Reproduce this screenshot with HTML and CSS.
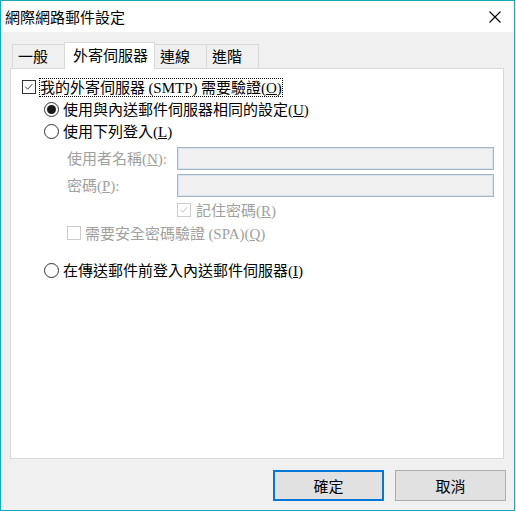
FILE: index.html
```
<!DOCTYPE html>
<html lang="zh-Hant">
<head>
<meta charset="utf-8">
<title>網際網路郵件設定</title>
<link rel="stylesheet" href="styles.css">
</head>
<body>
<div class="window">
  <div class="titlebar">
    <span class="title">網際網路郵件設定</span>
    <svg class="close" viewBox="0 0 12 12" width="12" height="12"><path d="M0.5 0.5 L11.5 11.5 M11.5 0.5 L0.5 11.5" stroke="#000" stroke-width="1.1" fill="none"/></svg>
  </div>
  <div class="body">
    <div class="tabs">
      <div class="tab">一般</div>
      <div class="tab active">外寄伺服器</div>
      <div class="tab">連線</div>
      <div class="tab">進階</div>
    </div>
    <div class="panel">
      <div class="row">
        <span class="check checked"><svg viewBox="0 0 14 14" width="12" height="12"><path d="M2.5 6.5 L5.5 9.5 L11 3.5" stroke="#333" stroke-width="1.1" fill="none"/></svg></span>
        <span class="focus">我的外寄伺服器 <span class="lat">(SMTP)</span> 需要驗證<span class="lat">(<u>O</u>)</span></span>
      </div>
      <div class="row indent1">
        <span class="radio on"></span>
        <span>使用與內送郵件伺服器相同的設定<span class="lat">(<u>U</u>)</span></span>
      </div>
      <div class="row indent1">
        <span class="radio"></span>
        <span>使用下列登入<span class="lat">(<u>L</u>)</span></span>
      </div>
      <div class="field first disabled">
        <span class="label">使用者名稱<span class="lat">(<u>N</u>):</span></span>
        <span class="input"></span>
      </div>
      <div class="field second disabled">
        <span class="label">密碼<span class="lat">(<u>P</u>):</span></span>
        <span class="input"></span>
      </div>
      <div class="row remember disabled">
        <span class="check dis"><svg viewBox="0 0 14 14" width="12" height="12"><path d="M2.5 6.5 L5.5 9.5 L11 3.5" stroke="#bcbcbc" stroke-width="1.1" fill="none"/></svg></span>
        <span>記住密碼<span class="lat">(<u>R</u>)</span></span>
      </div>
      <div class="row spa disabled">
        <span class="check dis"></span>
        <span>需要安全密碼驗證 <span class="lat">(SPA)(<u>Q</u>)</span></span>
      </div>
      <div class="row indent1 last">
        <span class="radio"></span>
        <span>在傳送郵件前登入內送郵件伺服器<span class="lat">(<u>I</u>)</span></span>
      </div>
    </div>
    <div class="buttons">
      <div class="btn primary">確定</div>
      <div class="btn">取消</div>
    </div>
  </div>
</div>
</body>
</html>
```
FILE: styles.css
```
* { box-sizing: border-box; }
html, body { margin: 0; padding: 0; background: #fff; }
body {
  font-family: "Noto Sans CJK TC", "Noto Sans", sans-serif;
  font-size: 15px;
  color: #000;
}
.lat { font-family: "Liberation Serif", serif; }
u { text-decoration: underline; text-underline-offset: 1px; }

.window {
  width: 515px;
  height: 511px;
  border: 1px solid #1ba7ba;
  display: flex;
  flex-direction: column;
}
.titlebar {
  height: 31px;
  background: #fff;
  display: flex;
  align-items: center;
  justify-content: space-between;
  padding: 0 13px 0 4px;
}
.title { line-height: 18px; }
.close { display: block; }

.body {
  flex: 1;
  background: #f0f0f0;
  padding: 10px 10px 9px 9px;
  display: flex;
  flex-direction: column;
}
.tabs {
  display: flex;
  align-items: flex-end;
  height: 26px;
  padding-left: 2px;
  position: relative;
  z-index: 1;
}
.tab {
  height: 24px;
  width: 53px;
  margin-left: -1px;
  padding-left: 5px;
  border: 1px solid #d9d9d9;
  border-bottom: none;
  background: #f0f0f0;
  line-height: 22px;
  white-space: nowrap;
}
.tab:first-child { margin-left: 0; }
.tab.active {
  position: relative;
  height: 27px;
  width: 91px;
  padding-left: 8px;
  margin-bottom: -1px;
  background: #fff;
  line-height: 24px;
}

.panel {
  height: 391px;
  border: 1px solid #d9d9d9;
  background: #fff;
  padding: 7px 0 0 11px;
  display: flex;
  flex-direction: column;
}
.row {
  display: flex;
  align-items: center;
  height: 22px;
  line-height: 16px;
  white-space: nowrap;
}
.indent1 { padding-left: 22px; }
.check {
  width: 14px;
  height: 14px;
  border: 1px solid #333;
  background: #fff;
  display: flex;
  align-items: center;
  justify-content: center;
  margin-right: 3px;
  flex: none;
}
.check.dis { border-color: #cccccc; }
.focus {
  border: 1px dotted #000;
  padding: 0;
  line-height: 16px;
}
.radio {
  width: 15px;
  height: 15px;
  border: 1px solid #333;
  border-radius: 50%;
  background: #fff;
  margin-right: 4px;
  flex: none;
  display: flex;
  align-items: center;
  justify-content: center;
}
.radio.on::after {
  content: "";
  width: 9px;
  height: 9px;
  border-radius: 50%;
  background: #1a1a1a;
}
.disabled { color: #a0a0a0; }
.field {
  display: flex;
  align-items: center;
  height: 23px;
  padding-left: 45px;
  white-space: nowrap;
}
.field.first { margin-top: 5px; }
.field.second { margin-top: 4px; }
.label { width: 110px; line-height: 16px; }
.input {
  width: 317px;
  height: 23px;
  border: 1px solid #aab2ba;
  box-shadow: inset 0 0 0 1px #d3e5f5;
  background: #f0f0f0;
}
.remember { margin-top: 2px; padding-left: 155px; }
.remember .check { margin-right: 5px; }
.spa { margin-top: 1px; padding-left: 45px; }
.spa .check { margin-right: 4px; }
.last { margin-top: 15px; }

.buttons {
  margin-top: 11px;
  margin-right: -2px;
  display: flex;
  justify-content: flex-end;
  gap: 11px;
}
.btn {
  width: 111px;
  height: 31px;
  border: 1px solid #adadad;
  background: #e1e1e1;
  display: flex;
  align-items: center;
  justify-content: center;
  line-height: 16px;
}
.btn.primary { border: 2px solid #0078d7; }
```
